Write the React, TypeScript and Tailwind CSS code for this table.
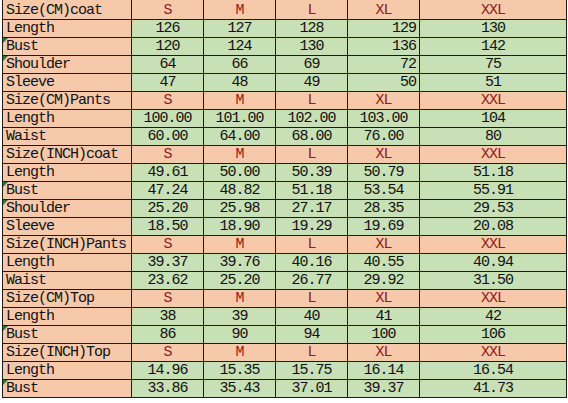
import React from "react";

type Row =
  | { kind: "h"; label: string }
  | { kind: "d"; label: string; vals: string[]; xlRight?: boolean; tri?: boolean };

const rows: Row[] = [
  { kind: "h", label: "Size(CM)coat" },
  { kind: "d", label: "Length", vals: ["126", "127", "128", "129", "130"], xlRight: true },
  { kind: "d", label: "Bust", vals: ["120", "124", "130", "136", "142"], xlRight: true, tri: true },
  { kind: "d", label: "Shoulder", vals: ["64", "66", "69", "72", "75"], xlRight: true, tri: true },
  { kind: "d", label: "Sleeve", vals: ["47", "48", "49", "50", "51"], xlRight: true },
  { kind: "h", label: "Size(CM)Pants" },
  { kind: "d", label: "Length", vals: ["100.00", "101.00", "102.00", "103.00", "104"] },
  { kind: "d", label: "Waist", vals: ["60.00", "64.00", "68.00", "76.00", "80"] },
  { kind: "h", label: "Size(INCH)coat" },
  { kind: "d", label: "Length", vals: ["49.61", "50.00", "50.39", "50.79", "51.18"] },
  { kind: "d", label: "Bust", vals: ["47.24", "48.82", "51.18", "53.54", "55.91"], tri: true },
  { kind: "d", label: "Shoulder", vals: ["25.20", "25.98", "27.17", "28.35", "29.53"], tri: true },
  { kind: "d", label: "Sleeve", vals: ["18.50", "18.90", "19.29", "19.69", "20.08"] },
  { kind: "h", label: "Size(INCH)Pants" },
  { kind: "d", label: "Length", vals: ["39.37", "39.76", "40.16", "40.55", "40.94"] },
  { kind: "d", label: "Waist", vals: ["23.62", "25.20", "26.77", "29.92", "31.50"] },
  { kind: "h", label: "Size(CM)Top" },
  { kind: "d", label: "Length", vals: ["38", "39", "40", "41", "42"] },
  { kind: "d", label: "Bust", vals: ["86", "90", "94", "100", "106"], tri: true },
  { kind: "h", label: "Size(INCH)Top" },
  { kind: "d", label: "Length", vals: ["14.96", "15.35", "15.75", "16.14", "16.54"] },
  { kind: "d", label: "Bust", vals: ["33.86", "35.43", "37.01", "39.37", "41.73"], tri: true },
];

const sizes = ["S", "M", "L", "XL", "XXL"];

const cellBase =
  "relative flex items-end border-r border-b border-[#1c1c1c] pb-[1px] leading-[14px] whitespace-nowrap overflow-hidden";

export default function App() {
  return (
    <div className="w-[568px] h-[403px] bg-white overflow-hidden">
      <div
        className="ml-[2px] w-[565px] grid grid-cols-[129px_72px_72px_72px_72px_147px] border-l border-[#1c1c1c] text-[15px] tracking-[-1px] text-[#111]"
        style={{ fontFamily: '"Liberation Mono", "DejaVu Sans Mono", monospace' }}
      >
        {rows.map((r, i) => {
          const h = i === 0 ? "h-[20px]" : "h-[18px]";
          const cells: React.ReactNode[] = [];
          cells.push(
            <div key={`l${i}`} className={`${cellBase} ${h} bg-[#f7c9ab] pl-[3px]`}>
              {r.kind === "d" && r.tri ? (
                <span className="absolute left-0 top-0 w-0 h-0 border-t-[5px] border-t-[#1f7a3a] border-r-[5px] border-r-transparent" />
              ) : null}
              {r.label}
            </div>
          );
          if (r.kind === "h") {
            sizes.forEach((s, j) =>
              cells.push(
                <div
                  key={`h${i}-${j}`}
                  className={`${cellBase} ${h} bg-[#f7c9ab] justify-center text-[#8e1c1c]`}
                >
                  {s}
                </div>
              )
            );
          } else {
            r.vals.forEach((v, j) =>
              cells.push(
                <div
                  key={`d${i}-${j}`}
                  className={`${cellBase} ${h} bg-[#c8e0b6] ${
                    j === 3 && r.xlRight ? "justify-end pr-[3px]" : "justify-center"
                  }`}
                >
                  {v}
                </div>
              )
            );
          }
          return <React.Fragment key={i}>{cells}</React.Fragment>;
        })}
      </div>
    </div>
  );
}
